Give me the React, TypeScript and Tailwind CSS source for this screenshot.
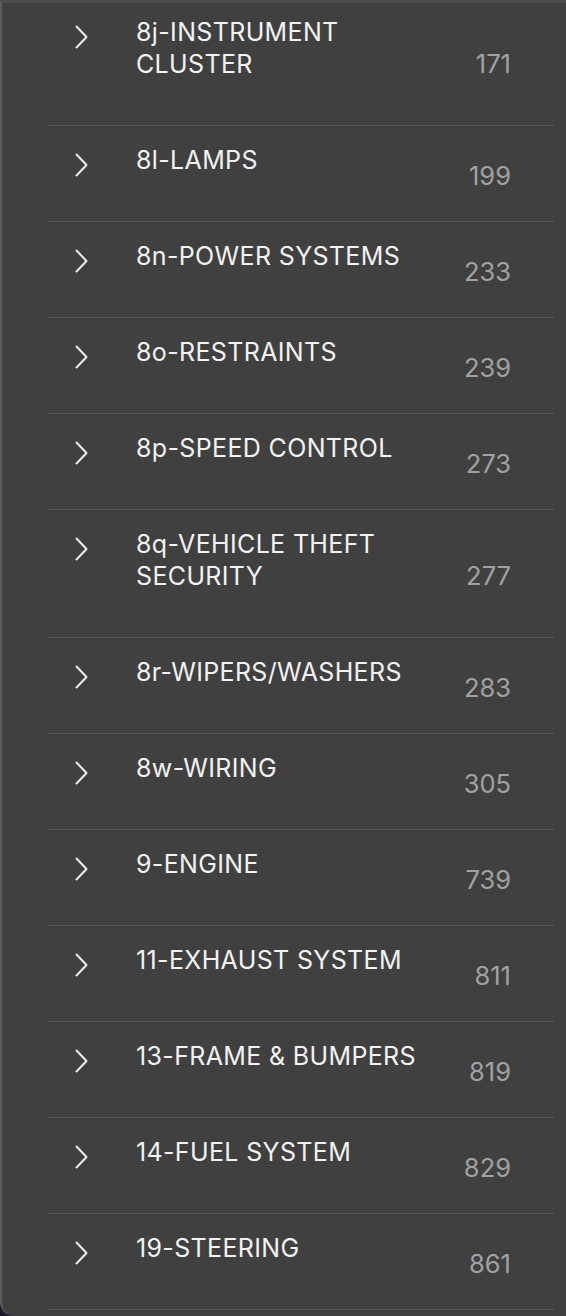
import React from "react";

const rows: { title: string; page: string }[] = [
  { title: "8j-INSTRUMENT CLUSTER", page: "171" },
  { title: "8l-LAMPS", page: "199" },
  { title: "8n-POWER SYSTEMS", page: "233" },
  { title: "8o-RESTRAINTS", page: "239" },
  { title: "8p-SPEED CONTROL", page: "273" },
  { title: "8q-VEHICLE THEFT SECURITY", page: "277" },
  { title: "8r-WIPERS/WASHERS", page: "283" },
  { title: "8w-WIRING", page: "305" },
  { title: "9-ENGINE", page: "739" },
  { title: "11-EXHAUST SYSTEM", page: "811" },
  { title: "13-FRAME & BUMPERS", page: "819" },
  { title: "14-FUEL SYSTEM", page: "829" },
  { title: "19-STEERING", page: "861" },
];

function Chevron() {
  return (
    <svg width="13" height="24" viewBox="0 0 13 24" fill="none" className="block">
      <polyline
        points="1.5,1.5 11.5,12 1.5,22.5"
        stroke="#ececec"
        strokeWidth="2"
        strokeLinecap="round"
        strokeLinejoin="round"
      />
    </svg>
  );
}

export default function App() {
  return (
    <div
      className="h-[1316px] w-[566px] overflow-hidden bg-[#1b1a2c]"
      style={{ fontFamily: "Inter, 'Liberation Sans', sans-serif" }}
    >
      <div className="h-full overflow-hidden rounded-bl-[14px] border-l-2 border-t-[3px] border-l-[#5c5c5c] border-t-[#4c4c4c] bg-[#404040]">
        <div className="-mt-[5px] ml-[46px] mr-[12px]">
          {rows.map((r) => (
            <div key={r.title} className="flex items-stretch border-b border-[#565656] pl-[27px] pr-[43px]">
              <div className="mt-[27px] w-[13px] shrink-0">
                <Chevron />
              </div>
              <div className="ml-[48px] w-[300px] shrink-0 pt-[18px] pb-[45px] text-[25px] leading-[32px] tracking-[0.35px] text-[#f2f2f2]">
                {r.title}
              </div>
              <div className="flex flex-1 items-center justify-end pt-[5px] text-[25.5px] text-[#a2a2a2]">
                {r.page}
              </div>
            </div>
          ))}
        </div>
      </div>
    </div>
  );
}
